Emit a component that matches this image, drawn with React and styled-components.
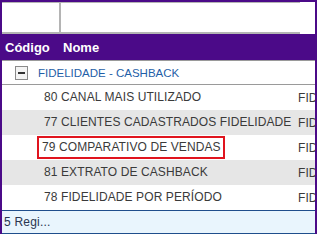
import React from 'react';
import styled, { createGlobalStyle } from 'styled-components';

const Global = createGlobalStyle`
  html, body { margin: 0; padding: 0; background: #fff; }
  body { font-family: "Liberation Sans", Arial, sans-serif; }
`;

const Panel = styled.div`
  width: 317px;
  box-sizing: border-box;
  border: 2px solid #4b0a88;
  border-bottom: none;
  overflow: hidden;
  background: #fff;
`;

const FilterRow = styled.div`
  display: flex;
  height: 32px;
`;

const FilterCell = styled.div`
  width: ${p => p.$w}px;
  box-sizing: border-box;
  border-top: 1px solid #b4b4b4;
  border-bottom: 2px solid #b4b4b4;
  border-right: ${p => (p.$divider ? '2px solid #b4b4b4' : 'none')};
`;

const Header = styled.div`
  display: flex;
  align-items: center;
  height: 26px;
  background: #4b0a88;
  border-bottom: 1px solid #9a9a9a;
  color: #fff;
  font-weight: bold;
  font-size: 13px;
`;

const HeadCell = styled.div`
  width: ${p => p.$w}px;
  padding-left: ${p => p.$pad}px;
  box-sizing: border-box;
`;

const GroupRow = styled.div`
  display: flex;
  align-items: center;
  height: 23px;
  border-bottom: 1px solid #9a9a9a;
  padding-left: 13px;
  color: #1f5fa8;
  font-size: 11.5px;
  white-space: nowrap;
`;

const Toggle = styled.span`
  width: 11px;
  height: 12px;
  border: 1px solid #8a8a8a;
  background: #f4f4f4;
  display: flex;
  align-items: center;
  justify-content: center;
  margin-right: 10px;
  &::before {
    content: '';
    width: 7px;
    height: 2px;
    background: #333;
  }
`;

const Row = styled.div`
  display: flex;
  align-items: center;
  height: 25px;
  background: ${p => (p.$alt ? '#e6e6e6' : '#fff')};
  color: #3a3a3a;
  font-size: 12px;
  letter-spacing: 0.1px;
  white-space: nowrap;
`;

const Name = styled.div`
  width: 296px;
  flex-shrink: 0;
  overflow: hidden;
  box-sizing: border-box;
  padding-left: 35px;
  display: flex;
  align-items: center;
`;

const NameText = styled.span`
  display: inline-block;
  line-height: 19px;
  padding: 0 2px 0 ${p => (p.$sel ? 3 : 7)}px;
  border: ${p => (p.$sel ? '2px solid #e0141e' : 'none')};
`;

const Extra = styled.div`
  color: #3a3a3a;
`;

const Footer = styled.div`
  height: 22px;
  border-top: 1px solid #1f4e8c;
  border-bottom: 1px solid #1f4e8c;
  background: #e9f5fd;
  display: flex;
  align-items: center;
  padding-left: 2px;
  color: #2a3550;
  font-size: 12px;
  letter-spacing: 0.2px;
`;

const rows = [
  { code: 80, name: 'CANAL MAIS UTILIZADO' },
  { code: 77, name: 'CLIENTES CADASTRADOS FIDELIDADE' },
  { code: 79, name: 'COMPARATIVO DE VENDAS', sel: true },
  { code: 81, name: 'EXTRATO DE CASHBACK' },
  { code: 78, name: 'FIDELIDADE POR PERÍODO' },
];

export default function App() {
  return (
    <>
      <Global />
      <Panel>
        <FilterRow>
          <FilterCell $w={59} $divider />
          <FilterCell $w={239} />
        </FilterRow>
        <Header>
          <HeadCell $w={59} $pad={3}>Código</HeadCell>
          <HeadCell $w={200} $pad={2}>Nome</HeadCell>
        </Header>
        <GroupRow>
          <Toggle />
          FIDELIDADE - CASHBACK
        </GroupRow>
        {rows.map((r, i) => (
          <Row key={r.code} $alt={i % 2 === 1}>
            <Name>
              <NameText $sel={r.sel}>{r.code} {r.name}</NameText>
            </Name>
            <Extra>FIDELIDADE - CASHBACK</Extra>
          </Row>
        ))}
        <Footer>5 Regi...</Footer>
      </Panel>
    </>
  );
}
